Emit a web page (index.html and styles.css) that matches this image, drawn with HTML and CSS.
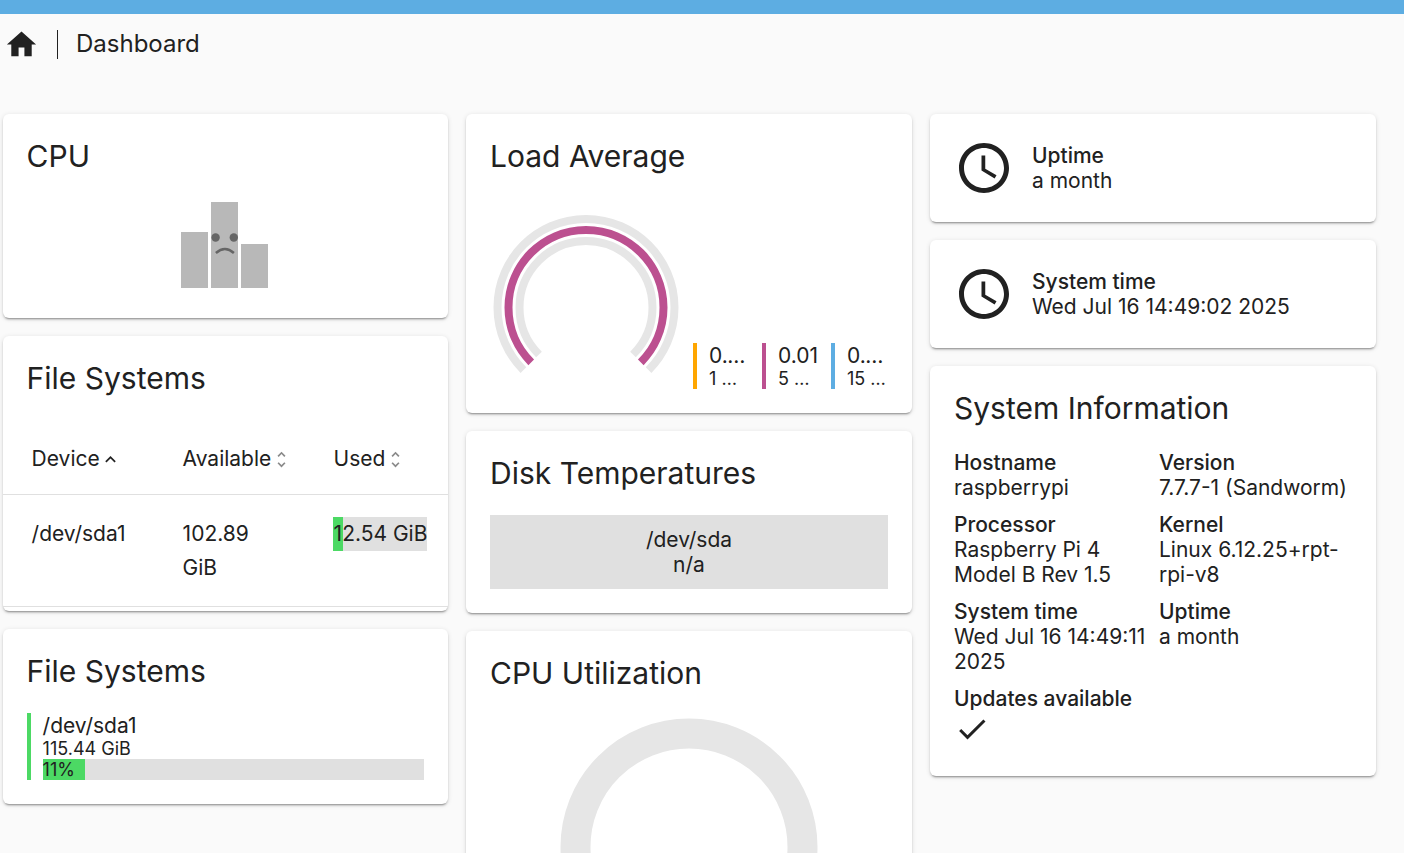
FILE: index.html
```html
<!DOCTYPE html>
<html lang="en">
<head>
    <meta charset="UTF-8">
    <meta name="viewport" content="width=device-width, initial-scale=1.0">
    <title>Dashboard</title>
    <link rel="stylesheet" href="styles.css">
</head>
<body>

<div class="topbar"></div>

<!-- Breadcrumb -->
<div class="crumbs">
    <svg class="home-icon" viewBox="0 0 24 24"><path d="M10 20v-6h4v6h5v-8h3L12 3 2 12h3v8z"/></svg>
    <span class="crumb-divider"></span>
    <span class="crumb-text">Dashboard</span>
</div>

<div class="columns">
    <div class="column">
        <!-- CPU, no data -->
        <div class="card">
            <h2 class="card-title">CPU</h2>
            <svg class="no-data" viewBox="0 0 88 86">
                <rect class="no-data-bar" x="0" y="30" width="27" height="56"/>
                <rect class="no-data-bar" x="30" y="0" width="27" height="86"/>
                <rect class="no-data-bar" x="60" y="42" width="27" height="44"/>
                <circle class="no-data-face" cx="34.6" cy="35.5" r="4.2"/>
                <circle class="no-data-face" cx="52.8" cy="35.5" r="4.2"/>
                <path class="no-data-mouth" d="M34.900 51 Q43.900 43 52.900 51"/>
            </svg>
        </div>

        <!-- File systems table -->
        <div class="card card-table">
            <h2 class="card-title">File Systems</h2>
            <table class="fs-table">
                <thead>
                    <tr>
                        <th class="col-device">Device<svg class="sort-icon sort-active" viewBox="0 0 24 24"><path d="M12 8l-6 6 1.410 1.410L12 10.830l4.590 4.580L18 14z"/></svg></th>
                        <th class="col-available">Available<svg class="sort-icon" viewBox="0 0 24 24"><path d="M12 5.830 15.170 9l1.410-1.410L12 3 7.410 7.590 8.830 9 12 5.830zm0 12.340L8.830 15l-1.410 1.410L12 21l4.590-4.590L15.170 15 12 18.170z"/></svg></th>
                        <th class="col-used">Used<svg class="sort-icon" viewBox="0 0 24 24"><path d="M12 5.830 15.170 9l1.410-1.410L12 3 7.410 7.590 8.830 9 12 5.830zm0 12.340L8.830 15l-1.410 1.410L12 21l4.590-4.590L15.170 15 12 18.170z"/></svg></th>
                    </tr>
                </thead>
                <tbody>
                    <tr>
                        <td>/dev/sda1</td>
                        <td>102.89 GiB</td>
                        <td><div class="used-bar"><div class="used-fill" style="width: 11%"></div><span class="used-text">12.54 GiB</span></div></td>
                    </tr>
                </tbody>
            </table>
        </div>

        <!-- File systems list -->
        <div class="card">
            <h2 class="card-title title-close">File Systems</h2>
            <div class="fs-item">
                <div class="fs-name">/dev/sda1</div>
                <div class="fs-size">115.44 GiB</div>
                <div class="fs-bar"><div class="fs-fill" style="width: 11%"></div><span class="fs-percent">11%</span></div>
            </div>
        </div>
    </div>

    <div class="column">
        <!-- Load average -->
        <div class="card">
            <h2 class="card-title title-load">Load Average</h2>
            <div class="load-row">
                <svg class="gauge" viewBox="0 0 192 176">
                    <path class="gauge-track" d="M33.420 157.080 A88.500 88.500 0 1 1 158.580 157.080"/>
                    <path class="gauge-pink" d="M41.200 149.300 A77.500 77.500 0 1 1 150.800 149.300"/>
                    <path class="gauge-track" d="M48.980 141.520 A66.500 66.500 0 1 1 143.020 141.520"/>
                </svg>
                <div class="legend">
                    <div class="legend-item legend-orange">
                        <div class="legend-value">0.00</div>
                        <div class="legend-label">1 min</div>
                    </div>
                    <div class="legend-item legend-pink">
                        <div class="legend-value">0.01</div>
                        <div class="legend-label">5 min</div>
                    </div>
                    <div class="legend-item legend-blue">
                        <div class="legend-value">0.00</div>
                        <div class="legend-label">15 min</div>
                    </div>
                </div>
            </div>
        </div>

        <!-- Disk temperatures -->
        <div class="card">
            <h2 class="card-title title-close">Disk Temperatures</h2>
            <div class="disk-box">
                <div>/dev/sda</div>
                <div>n/a</div>
            </div>
        </div>

        <!-- CPU utilization -->
        <div class="card">
            <h2 class="card-title title-close">CPU Utilization</h2>
            <svg class="cpu-ring" viewBox="0 0 258 258"><circle cx="129" cy="129" r="113.500"/></svg>
        </div>
    </div>

    <div class="column">
        <div class="card stat-card">
            <svg class="clock-icon" viewBox="0 0 24 24"><path d="M11.990 2C6.470 2 2 6.480 2 12s4.470 10 9.990 10C17.520 22 22 17.520 22 12S17.520 2 11.990 2zM12 20c-4.420 0-8-3.580-8-8s3.580-8 8-8 8 3.580 8 8-3.580 8-8 8z"/><path d="M12.500 7H11v6l5.250 3.150.75-1.230-4.500-2.670z"/></svg>
            <div>
                <div class="info-label">Uptime</div>
                <div>a month</div>
            </div>
        </div>

        <div class="card stat-card">
            <svg class="clock-icon" viewBox="0 0 24 24"><path d="M11.990 2C6.470 2 2 6.480 2 12s4.470 10 9.990 10C17.520 22 22 17.520 22 12S17.520 2 11.990 2zM12 20c-4.420 0-8-3.580-8-8s3.580-8 8-8 8 3.580 8 8-3.580 8-8 8z"/><path d="M12.500 7H11v6l5.250 3.150.75-1.230-4.500-2.670z"/></svg>
            <div>
                <div class="info-label">System time</div>
                <div>Wed Jul 16 14:49:02 2025</div>
            </div>
        </div>

        <!-- System information -->
        <div class="card card-info">
            <h2 class="card-title title-close">System Information</h2>
            <div class="info-grid">
                <div>
                    <div class="info-label">Hostname</div>
                    <div>raspberrypi</div>
                </div>
                <div>
                    <div class="info-label">Version</div>
                    <div>7.7.7-1 (Sandworm)</div>
                </div>
                <div>
                    <div class="info-label">Processor</div>
                    <div>Raspberry Pi 4 Model B Rev 1.5</div>
                </div>
                <div>
                    <div class="info-label">Kernel</div>
                    <div>Linux 6.12.25+rpt-rpi-v8</div>
                </div>
                <div>
                    <div class="info-label">System time</div>
                    <div>Wed Jul 16 14:49:11 2025</div>
                </div>
                <div>
                    <div class="info-label">Uptime</div>
                    <div>a month</div>
                </div>
                <div class="info-wide">
                    <div class="info-label">Updates available</div>
                    <svg class="check-icon" viewBox="0 0 24 24"><path d="M9 16.170 4.830 12l-1.420 1.410L9 19 21 7l-1.410-1.410z"/></svg>
                </div>
            </div>
        </div>
    </div>
</div>

</body>
</html>
```

FILE: styles.css
```css
html, body {
    height: 100%;
}
body {
    margin: 0;
    overflow: hidden;
    background-color: #fafafa;
    color: #212121;
    font-family: Inter, "Liberation Sans", sans-serif;
    font-size: 21px;
    line-height: 25px;
}
.topbar {
    height: 14px;
    background-color: #5dade2;
}
.crumbs {
    display: flex;
    align-items: center;
    height: 60px;
    padding-left: 4px;
}
.home-icon {
    width: 35px;
    height: 35px;
    margin-top: 1px;
    fill: #212121;
}
.crumb-divider {
    width: 1px;
    height: 29px;
    margin: 0 18px;
    background-color: #212121;
}
.crumb-text {
    margin-top: -2px;
    font-size: 24px;
}
.columns {
    display: grid;
    grid-template-columns: 445.4px 446px 446px;
    column-gap: 18px;
    margin-top: 40px;
    padding-left: 2.6px;
}
.column {
    display: flex;
    flex-direction: column;
    gap: 18px;
}
.card {
    background-color: #fff;
    border-radius: 6px;
    box-shadow: 0 3px 1px -2px rgba(0, 0, 0, 0.2), 0 2px 2px 0 rgba(0, 0, 0, 0.14), 0 1px 5px 0 rgba(0, 0, 0, 0.12);
    padding: 24px;
}
.card-title {
    margin: 0 0 28px;
    font-size: 30px;
    font-weight: 400;
    line-height: 36px;
}
.title-close {
    margin-bottom: 24px;
}
.title-load {
    margin-bottom: 39px;
}

/* CPU no data picture */
.no-data {
    display: block;
    width: 88px;
    height: 86px;
    margin: 0 auto 6px;
}
.no-data-bar {
    fill: #b8b8b8;
}
.no-data-face {
    fill: #666;
}
.no-data-mouth {
    fill: none;
    stroke: #666;
    stroke-width: 2.5;
}

/* File systems table */
.card-table {
    padding: 24px 0 4px;
}
.card-table .card-title {
    padding-left: 24px;
}
.fs-table {
    width: 100%;
    table-layout: fixed;
    border-collapse: collapse;
}
.col-device, .col-available {
    width: 151px;
}
.fs-table th {
    box-sizing: border-box;
    height: 70px;
    padding: 0 0 0 29px;
    border-bottom: 1px solid #e0e0e0;
    font-weight: 400;
    text-align: left;
    white-space: nowrap;
}
.fs-table td {
    padding: 22px 21px 21px 29px;
    border-bottom: 1px solid #e0e0e0;
    line-height: 34px;
    vertical-align: top;
}
.fs-table td:last-child {
    padding-left: 28px;
}
.sort-icon {
    width: 21px;
    height: 21px;
    vertical-align: -4px;
    fill: #8a8a8a;
}
.sort-active {
    fill: #212121;
}
.used-bar {
    position: relative;
    height: 34px;
    background-color: #e0e0e0;
    white-space: nowrap;
}
.used-fill {
    height: 100%;
    background-color: #4cd964;
}
.used-text {
    position: absolute;
    top: 0;
    left: 1px;
}

/* File systems list */
.fs-item {
    padding-left: 12px;
    border-left: 4px solid #4cd964;
}
.fs-name {
    line-height: 26px;
}
.fs-size {
    font-size: 18px;
    line-height: 20px;
}
.fs-bar {
    position: relative;
    height: 21px;
    background-color: #e0e0e0;
    font-size: 18px;
    line-height: 21px;
}
.fs-fill {
    height: 100%;
    background-color: #4cd964;
}
.fs-percent {
    position: absolute;
    top: 0;
    left: 0;
}

/* Load average */
.load-row {
    display: flex;
    align-items: flex-end;
    gap: 11px;
}
.gauge {
    width: 192px;
    height: 176px;
    flex: none;
}
.gauge path {
    fill: none;
    stroke-width: 8;
}
.gauge-track {
    stroke: #e6e6e6;
}
.gauge-pink {
    stroke: #bc5090;
}
.legend {
    display: flex;
    gap: 12px;
}
.legend-item {
    width: 41px;
    padding-left: 12px;
    border-left: 4px solid;
}
.legend-orange {
    border-color: #ffa600;
}
.legend-pink {
    border-color: #bc5090;
}
.legend-blue {
    border-color: #5dade2;
}
.legend-value, .legend-label {
    overflow: hidden;
    text-overflow: ellipsis;
    white-space: nowrap;
}
.legend-label {
    font-size: 18px;
    line-height: 21px;
}

/* Disk temperatures */
.disk-box {
    padding: 12px;
    background-color: #e0e0e0;
    text-align: center;
}

/* CPU utilization */
.cpu-ring {
    display: block;
    width: 258px;
    height: 258px;
    margin: 27px auto 0;
}
.cpu-ring circle {
    fill: none;
    stroke: #e6e6e6;
    stroke-width: 30;
}

/* Stat cards and system info */
.stat-card {
    display: flex;
    align-items: center;
    gap: 18px;
}
.clock-icon {
    width: 60px;
    height: 60px;
    flex: none;
    fill: #212121;
}
.info-label {
    font-weight: 500;
}
.info-grid {
    display: grid;
    grid-template-columns: 1fr 1fr;
    gap: 12px;
}
.info-wide {
    grid-column: span 2;
}
.check-icon {
    display: block;
    width: 36px;
    height: 36px;
    fill: #212121;
}
.card-info {
    padding-bottom: 29px;
}
```
